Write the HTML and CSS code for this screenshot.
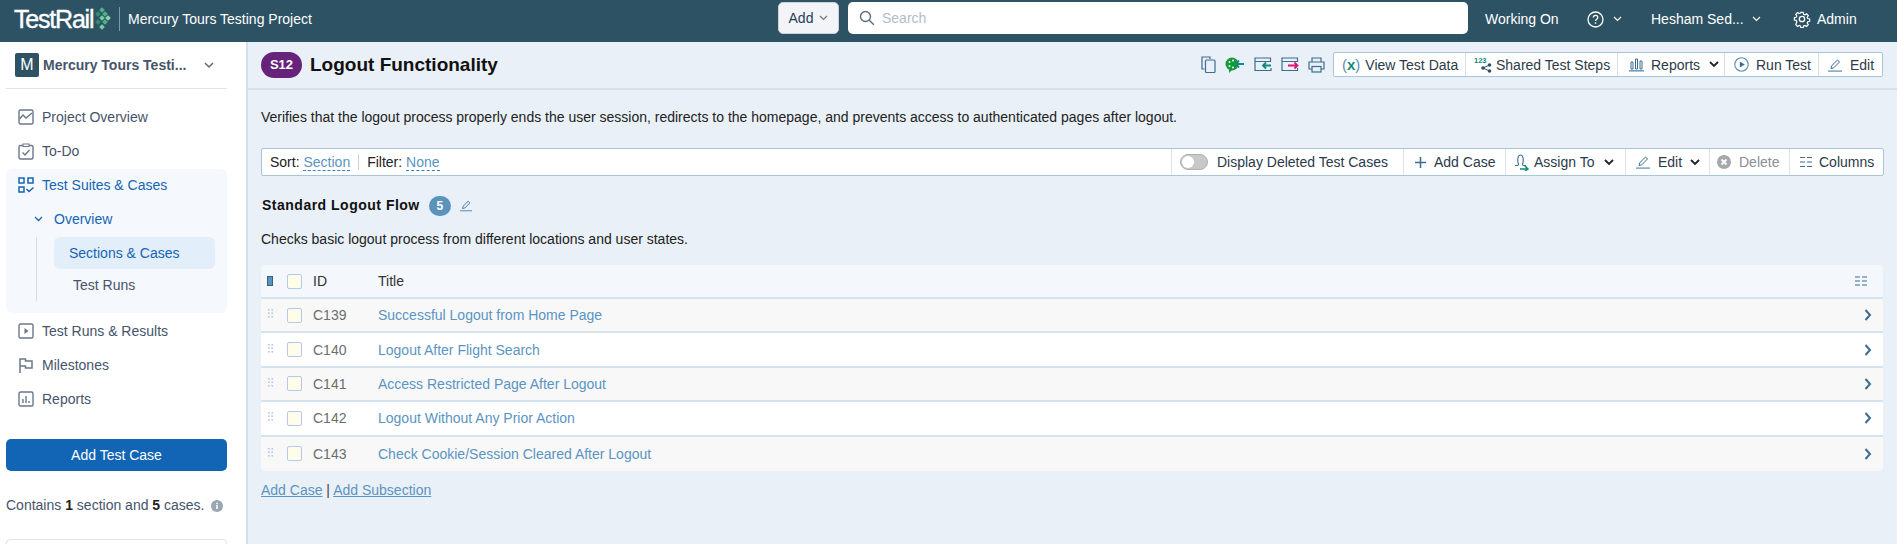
FILE: index.html
```html
<!DOCTYPE html>
<html lang="en">
<head>
<meta charset="utf-8">
<title>TestRail</title>
<link rel="stylesheet" href="styles.css">
</head>
<body>
<header class="topbar">
  <div class="brand">
    <span class="logo-text">TestRail</span>
    <svg class="logo-mark" width="16" height="24" viewBox="0 0 16 24"><g fill="#4fb286"><rect x="5" y="1" width="4" height="4" transform="rotate(45 7 3)"/><rect x="1" y="5" width="4" height="4" transform="rotate(45 3 7)" fill="#2e8f6c"/><rect x="8" y="5" width="4" height="4" transform="rotate(45 10 7)"/><rect x="5" y="9" width="4" height="4" transform="rotate(45 7 11)" fill="#7ccaa4"/><rect x="11" y="9" width="4" height="4" transform="rotate(45 13 11)" fill="#8ed6b0"/><rect x="1" y="13" width="4" height="4" transform="rotate(45 3 15)" fill="#2e8f6c"/><rect x="8" y="13" width="4" height="4" transform="rotate(45 10 15)"/><rect x="5" y="18" width="4" height="4" transform="rotate(45 7 20)" fill="#7ccaa4"/></g></svg>
    <span class="brand-sep"></span>
    <span class="project-name">Mercury Tours Testing Project</span>
  </div>
  <button class="add-btn">Add <svg width="9" height="6" viewBox="0 0 9 6"><path d="M1 1l3.5 3.5L8 1" fill="none" stroke="#6b7785" stroke-width="1.2"/></svg></button>
  <div class="search">
    <svg width="16" height="16" viewBox="0 0 16 16"><circle cx="6.5" cy="6.5" r="5" fill="none" stroke="#5c6b7d" stroke-width="1.4"/><path d="M10.3 10.3l4.5 4.5" stroke="#5c6b7d" stroke-width="1.4"/></svg>
    <span class="search-ph">Search</span>
  </div>
  <nav class="top-links">
    <span class="working">Working On</span>
    <span class="help"><svg width="17" height="17" viewBox="0 0 17 17"><circle cx="8.5" cy="8.5" r="7.5" fill="none" stroke="#fff" stroke-width="1.3"/><path d="M6.3 6.6c0-3 4.5-3 4.5-.2 0 1.8-2.3 1.8-2.3 3.7" fill="none" stroke="#fff" stroke-width="1.3"/><rect x="7.8" y="11.3" width="1.4" height="1.5" fill="#fff"/></svg><svg width="9" height="6" viewBox="0 0 9 6"><path d="M1 1l3.5 3.5L8 1" fill="none" stroke="#fff" stroke-width="1.2"/></svg></span>
    <span class="user">Hesham Sed... <svg width="9" height="6" viewBox="0 0 9 6"><path d="M1 1l3.5 3.5L8 1" fill="none" stroke="#fff" stroke-width="1.2"/></svg></span>
    <span class="admin"><svg width="18" height="18" viewBox="0 0 18 18"><circle cx="9" cy="9" r="2.7" fill="none" stroke="#fff" stroke-width="1.3"/><path d="M7.6 1.5h2.8l.4 2.2 1.5.7 1.9-1.2 2 2-1.2 1.9.6 1.5 2.1.4v2.8l-2.1.4-.6 1.5 1.2 1.9-2 2-1.9-1.2-1.5.6-.4 2.1H7.6l-.4-2.1-1.5-.6-1.9 1.2-2-2L3 12.2l-.7-1.5L.2 10.3V7.5l2.1-.4.7-1.5L1.8 3.7l2-2 1.9 1.2 1.5-.7z" transform="translate(1.2 1.1) scale(.87)" fill="none" stroke="#fff" stroke-width="1.4"/></svg>Admin</span>
  </nav>
</header>

<div class="layout">
  <aside class="sidebar">
    <div class="proj-select">
      <span class="proj-avatar">M</span>
      <span class="proj-title">Mercury Tours Testi...</span>
      <svg width="10" height="7" viewBox="0 0 10 7"><path d="M1 1l4 4 4-4" fill="none" stroke="#5b6b7d" stroke-width="1.5"/></svg>
    </div>
    <div class="nav-item">
      <svg class="nav-icon" width="16" height="16" viewBox="0 0 16 16"><rect x="1" y="1" width="14" height="14" rx="1.5" fill="none" stroke="#69778c" stroke-width="1.4"/><path d="M1.5 10l3.5-4 3 3 6-5" fill="none" stroke="#69778c" stroke-width="1.4"/></svg>
      <span>Project Overview</span>
    </div>
    <div class="nav-item">
      <svg class="nav-icon" width="16" height="17" viewBox="0 0 16 17"><rect x="1" y="2.5" width="14" height="13.5" rx="1.5" fill="none" stroke="#69778c" stroke-width="1.4"/><rect x="5" y="1" width="6" height="2.5" fill="#fff" stroke="#69778c"/><path d="M4.5 9.500l2.500 2.500 4.500-5" fill="none" stroke="#69778c" stroke-width="1.4"/></svg>
      <span>To-Do</span>
    </div>
    <div class="nav-group">
      <div class="nav-item active-top">
        <svg class="nav-icon" width="16" height="16" viewBox="0 0 16 16"><g fill="none" stroke="#1565b5" stroke-width="1.5"><rect x="1" y="1" width="5" height="5"/><rect x="10" y="1" width="5" height="5"/><rect x="1" y="10" width="5" height="5"/><path d="M8.5 12l2.500 2.500 4.500-4"/></g></svg>
        <span>Test Suites &amp; Cases</span>
      </div>
      <div class="nav-sub">
        <svg width="9" height="6" viewBox="0 0 9 6"><path d="M1 1l3.5 3.5L8 1" fill="none" stroke="#1565b5" stroke-width="1.3"/></svg>
        <span>Overview</span>
      </div>
      <div class="nav-tree">
        <div class="tree-item tree-current">Sections &amp; Cases</div>
        <div class="tree-item">Test Runs</div>
      </div>
    </div>
    <div class="nav-item">
      <svg class="nav-icon" width="16" height="16" viewBox="0 0 16 16"><rect x="1" y="1" width="14" height="14" rx="1.5" fill="none" stroke="#69778c" stroke-width="1.4"/><path d="M6.5 5l4 3-4 3z" fill="#69778c"/></svg>
      <span>Test Runs &amp; Results</span>
    </div>
    <div class="nav-item">
      <svg class="nav-icon" width="16" height="16" viewBox="0 0 16 16"><path d="M2 16V2h5.5v2H14v7H7.5V9H2" fill="none" stroke="#69778c" stroke-width="1.5"/></svg>
      <span>Milestones</span>
    </div>
    <div class="nav-item">
      <svg class="nav-icon" width="16" height="16" viewBox="0 0 16 16"><rect x="1" y="1" width="14" height="14" rx="1.5" fill="none" stroke="#69778c" stroke-width="1.4"/><path d="M5 8v4M8 5v7M11 10v2" stroke="#69778c" stroke-width="1.4"/></svg>
      <span>Reports</span>
    </div>
    <button class="primary-btn">Add Test Case</button>
    <p class="summary">Contains <b>1</b> section and <b>5</b> cases. <svg class="info" width="12" height="12" viewBox="0 0 12 12"><circle cx="6" cy="6" r="6" fill="#9ba6b3"/><rect x="5.2" y="5" width="1.6" height="4" fill="#fff"/><rect x="5.2" y="2.8" width="1.6" height="1.4" fill="#fff"/></svg></p>
    <div class="side-card"></div>
  </aside>

  <main class="main">
    <div class="title-row">
      <span class="pill">S12</span>
      <h1 class="title">Logout Functionality</h1>
      <div class="title-icons">
        <svg width="15" height="17" viewBox="0 0 15 17"><path d="M3.5 13H1V1h8v2" fill="none" stroke="#3f6d8f" stroke-width="1.2"/><rect x="4.5" y="4" width="9.5" height="12.5" rx="1" fill="none" stroke="#3f6d8f" stroke-width="1.2"/></svg>
        <svg width="20" height="17" viewBox="0 0 20 17"><circle cx="7" cy="8" r="6.5" fill="#129b38"/><path d="M7 14l-3 3v-4z" fill="#129b38"/><circle cx="4.5" cy="6" r="1" fill="#fff"/><circle cx="8" cy="4.5" r="1" fill="#fff"/><circle cx="4.5" cy="10" r="1" fill="#fff"/><circle cx="8" cy="11.5" r="1" fill="#fff"/><path d="M19 8h-8M14 4.500L10.500 8l3.500 3.500" fill="none" stroke="#118a78" stroke-width="1.8"/></svg>
        <svg width="18" height="15" viewBox="0 0 18 15"><path d="M17 11v2.500H1V1h15.500v3.500H1" fill="none" stroke="#3f6d8f" stroke-width="1.2"/><path d="M17 8.500H9M12 5.500l-3 3 3 3" fill="none" stroke="#118a78" stroke-width="1.8"/></svg>
        <svg width="18" height="15" viewBox="0 0 18 15"><path d="M16.500 11v2.500H1V1h15.500v3.500H1" fill="none" stroke="#3f6d8f" stroke-width="1.2"/><path d="M7 8.500h9.500M13.500 5.500l3 3-3 3" fill="none" stroke="#e0136e" stroke-width="1.8"/></svg>
        <svg width="17" height="16" viewBox="0 0 17 16"><path d="M4 5V1h9v4M4 12H1V5h15v7h-3" fill="none" stroke="#3f6d8f" stroke-width="1.2"/><rect x="4" y="9.5" width="9" height="5.5" fill="none" stroke="#3f6d8f" stroke-width="1.2"/></svg>
      </div>
      <div class="btn-bar">
        <span class="bar-item w-data"><span class="var-icon">(<i>x</i>)</span>View Test Data</span>
        <span class="bar-item w-shared"><svg width="18" height="16" viewBox="0 0 18 16"><text x="0" y="6" class="num-icon">123</text><g fill="#2d5263"><circle cx="9" cy="11" r="1.8"/><circle cx="15.5" cy="8" r="1.8"/><circle cx="15.5" cy="14" r="1.8"/></g><path d="M9 11l6.500-3M9 11l6.500 3" stroke="#2d5263"/></svg>Shared Test Steps</span>
        <span class="bar-item w-reports"><svg width="15" height="14" viewBox="0 0 15 14"><path d="M2 4h2v7H2zM6.500 1h2v10h-2zM11 3h2v8h-2z" fill="none" stroke="#3f6d8f"/><rect y="12" width="15" height="1.6" fill="#6e9fc0"/></svg>Reports<svg class="bar-chev" width="10" height="7" viewBox="0 0 10 7"><path d="M1 1l4 4 4-4" fill="none" stroke="#222" stroke-width="1.8"/></svg></span>
        <span class="bar-item w-run"><svg width="15" height="15" viewBox="0 0 15 15"><circle cx="7.5" cy="7.5" r="6.7" fill="none" stroke="#5c8db0" stroke-width="1.1"/><path d="M5.800 4.500l5 3-5 3z" fill="#3f6d8f"/></svg>Run Test</span>
        <span class="bar-item w-edit"><svg width="14" height="14" viewBox="0 0 14 14"><path d="M3 10.500l.6-2.700L9.500 2l2 2-5.800 5.900z" fill="none" stroke="#3f6d8f"/><rect y="12.4" width="14" height="1.4" fill="#6e9fc0"/></svg>Edit</span>
      </div>
    </div>

    <div class="content">
      <p class="lead">Verifies that the logout process properly ends the user session, redirects to the homepage, and prevents access to authenticated pages after logout.</p>

      <div class="toolbar">
        <div class="tb-left">
          <span>Sort: <a class="dash">Section</a></span>
          <span class="tb-sep"></span>
          <span>Filter: <a class="dash">None</a></span>
        </div>
        <span class="tb-item w-toggle"><span class="toggle"></span>Display Deleted Test Cases</span>
        <span class="tb-item w-addcase"><svg width="11" height="11" viewBox="0 0 11 11"><path d="M5.500 0v11M0 5.500h11" stroke="#3f6d8f" stroke-width="1.5"/></svg>Add Case</span>
        <span class="tb-item w-assign"><svg width="15" height="17" viewBox="0 0 15 17"><path d="M1 11.500h2.500C5 11.500 4.500 10 4 8.500 3.300 6 3.800 1 6.500 1s3.200 5 2.500 7.500c-.5 1.500-1 3 .5 3H12" fill="none" stroke="#3f6d8f" stroke-width="1.1"/><path d="M6 15h8M11 12l3 3-3 2" stroke="#118a78" stroke-width="1.5" fill="none"/></svg>Assign To<svg class="bar-chev" width="10" height="7" viewBox="0 0 10 7"><path d="M1 1l4 4 4-4" fill="none" stroke="#222" stroke-width="1.8"/></svg></span>
        <span class="tb-item w-tbedit"><svg width="14" height="14" viewBox="0 0 14 14"><path d="M3 10.500l.6-2.700L9.500 2l2 2-5.800 5.900z" fill="none" stroke="#3f6d8f"/><rect y="12.4" width="14" height="1.4" fill="#6e9fc0"/></svg>Edit<svg class="bar-chev" width="10" height="7" viewBox="0 0 10 7"><path d="M1 1l4 4 4-4" fill="none" stroke="#222" stroke-width="1.8"/></svg></span>
        <span class="tb-item w-delete"><svg width="14" height="14" viewBox="0 0 14 14"><circle cx="7" cy="7" r="7" fill="#a3a8ad"/><path d="M4.500 4.500l5 5M9.500 4.500l-5 5" stroke="#fff" stroke-width="1.8"/></svg>Delete</span>
        <span class="tb-item w-columns"><svg width="12" height="12" viewBox="0 0 12 12"><path d="M0 1.500h5M7 1.500h5M0 6h5M7 6h5M0 10.500h5M7 10.500h5" stroke="#3f6d8f" stroke-width="1.1"/></svg>Columns</span>
      </div>

      <div class="group-head">
        <h2 class="group-title">Standard Logout Flow</h2>
        <span class="count">5</span>
        <svg width="12" height="13" viewBox="0 0 14 14"><path d="M3 10.500l.6-2.700L9.500 2l2 2-5.800 5.900z" fill="none" stroke="#3f6d8f"/><rect y="12.4" width="14" height="1.4" fill="#6e9fc0"/></svg>
      </div>
      <p class="group-desc">Checks basic logout process from different locations and user states.</p>

      <div class="table">
        <div class="row head">
          <span class="handle"><span class="col-marker"></span></span>
          <span class="check"></span>
          <span class="cid head-text">ID</span>
          <span class="ctitle head-text">Title</span>
          <svg class="columns-ico" width="12" height="10" viewBox="0 0 12 10"><path d="M0 1h5M7 1h5M0 5h5M7 5h5M0 9h5M7 9h5" stroke="#3f6d8f" stroke-width="1.1"/></svg>
        </div>
        <div class="row odd">
          <span class="handle"><i class="dots"></i></span><span class="check"></span><span class="cid">C139</span><a class="ctitle">Successful Logout from Home Page</a>
          <svg class="go" width="8" height="12" viewBox="0 0 8 12"><path d="M1.500 1l4.500 5-4.500 5" fill="none" stroke="#3f6d8f" stroke-width="2"/></svg>
        </div>
        <div class="row">
          <span class="handle"><i class="dots"></i></span><span class="check"></span><span class="cid">C140</span><a class="ctitle">Logout After Flight Search</a>
          <svg class="go" width="8" height="12" viewBox="0 0 8 12"><path d="M1.500 1l4.500 5-4.500 5" fill="none" stroke="#3f6d8f" stroke-width="2"/></svg>
        </div>
        <div class="row odd">
          <span class="handle"><i class="dots"></i></span><span class="check"></span><span class="cid">C141</span><a class="ctitle">Access Restricted Page After Logout</a>
          <svg class="go" width="8" height="12" viewBox="0 0 8 12"><path d="M1.500 1l4.500 5-4.500 5" fill="none" stroke="#3f6d8f" stroke-width="2"/></svg>
        </div>
        <div class="row">
          <span class="handle"><i class="dots"></i></span><span class="check"></span><span class="cid">C142</span><a class="ctitle">Logout Without Any Prior Action</a>
          <svg class="go" width="8" height="12" viewBox="0 0 8 12"><path d="M1.500 1l4.500 5-4.500 5" fill="none" stroke="#3f6d8f" stroke-width="2"/></svg>
        </div>
        <div class="row odd last">
          <span class="handle"><i class="dots"></i></span><span class="check"></span><span class="cid">C143</span><a class="ctitle">Check Cookie/Session Cleared After Logout</a>
          <svg class="go" width="8" height="12" viewBox="0 0 8 12"><path d="M1.500 1l4.500 5-4.500 5" fill="none" stroke="#3f6d8f" stroke-width="2"/></svg>
        </div>
      </div>
      <p class="add-links"><a>Add Case</a> | <a>Add Subsection</a></p>
    </div>
  </main>
</div>
</body>
</html>
```

FILE: styles.css
```css
* { box-sizing: border-box; }
html, body { margin: 0; height: 544px; overflow: hidden; }
body { font: 14px/16px "Liberation Sans", Arial, sans-serif; color: #222; background: #e9f0f7; }
p, h1, h2 { margin: 0; }
svg { display: block; flex: none; }

.topbar { height: 42px; background: #2d5263; display: flex; align-items: center; color: #fff; padding-bottom: 4px; }
.brand { width: 778px; display: flex; align-items: center; padding-left: 14px; }
.logo-text { font-size: 25px; font-weight: 400; letter-spacing: -1.2px; width: 81px; -webkit-text-stroke: .4px #fff; }
.brand-sep { width: 1px; height: 24px; background: #7f9aa7; margin: 0 8px; }
.project-name { font-size: 14px; }
.add-btn { width: 61px; height: 32px; align-self: flex-start; margin-top: 2px; border: 1px solid #c9d2db; border-radius: 5px; background: #f2f4f7; color: #24405c; font: 14px "Liberation Sans", sans-serif; display: flex; align-items: center; justify-content: center; gap: 6px; padding: 0; }
.search { width: 620px; height: 32px; align-self: flex-start; margin: 2px 0 0 9px; background: #fff; border-radius: 5px; display: flex; align-items: center; gap: 7px; padding-left: 11px; }
.search-ph { color: #b4bcc8; }
.top-links { display: flex; align-items: center; margin-left: 17px; }
.working { width: 102px; }
.help { width: 64px; display: flex; align-items: center; gap: 9px; }
.user { width: 142px; display: flex; align-items: center; gap: 4px; }
.user svg { margin-left: 4px; }
.admin { display: flex; align-items: center; gap: 6px; }

.layout { display: flex; height: 502px; }
.sidebar { width: 248px; background: #fff; border-right: 2px solid #d6e0ea; padding: 0 19px 0 6px; flex: none; overflow: hidden; color: #46546a; }
.proj-select { height: 47px; display: flex; align-items: center; padding-left: 9px; border-bottom: 1px solid #dfe4ea; }
.proj-avatar { width: 24px; height: 24px; background: #2d5263; color: #fff; border-radius: 2px; font-size: 16px; text-align: center; line-height: 24px; flex: none; }
.proj-title { font-weight: 700; color: #46546a; width: 165px; padding-left: 4px; white-space: nowrap; font-size: 14px; }
.nav-item { height: 34px; display: flex; align-items: center; gap: 8px; padding-left: 12px; }
.proj-select + .nav-item { margin-top: 11px; }
.nav-group { background: #f5f8fd; border-radius: 6px; height: 144px; margin-top: 1px; color: #1565b5; }
.active-top { height: 32px; }
.nav-sub { height: 34px; margin-top: 1px; display: flex; align-items: center; gap: 11px; padding-left: 28px; }
.nav-tree { margin: 1px 0 0 30px; border-left: 1px solid #d8dee6; padding-left: 17px; height: 64px; width: 191px; }
.tree-item { height: 32px; line-height: 32px; padding-left: 15px; color: #46546a; width: 161px; }
.tree-current { background: #e3eefb; color: #1565b5; border-radius: 6px; padding-left: 15px; }
.tree-current + .tree-item { padding-left: 19px; }
.nav-group + .nav-item { margin-top: 1px; }
.primary-btn { display: block; width: 221px; height: 32px; margin-top: 23px; background: #1265b5; color: #fff; border: 0; border-radius: 5px; font: 14px "Liberation Sans", sans-serif; }
.summary { margin-top: 26px; white-space: nowrap; }
.summary b { color: #222; }
.info { display: inline-block; vertical-align: -2px; margin-left: 3px; }
.side-card { height: 40px; margin-top: 26px; border: 1px solid #dfe4ea; border-radius: 4px; }

.main { flex: 1; min-width: 0; }
.title-row { height: 48px; border-bottom: 2px solid #d6e0ea; display: flex; align-items: center; padding: 0 14px 0 13px; }
.pill { width: 41px; height: 26px; border-radius: 13px; background: #67237b; color: #fff; font-weight: 700; font-size: 13px; text-align: center; line-height: 26px; }
.title { font-size: 19px; line-height: 24px; font-weight: 700; color: #111; margin-left: 8px; white-space: nowrap; }
.title-icons { display: flex; align-items: center; gap: 9px; width: 132px; margin: 0 0 1px auto; }
.btn-bar { display: flex; height: 25px; margin-bottom: 1px; background: #fff; border: 1px solid #a9c5dc; border-radius: 2px; }
.bar-item { display: flex; align-items: center; border-right: 1px solid #d4dfe8; white-space: nowrap; color: #2b3a4a; }
.bar-item:last-child { border-right: 0; }
.w-data { width: 132px; padding-left: 8px; gap: 5px; }
.w-shared { width: 152px; padding-left: 8px; gap: 4px; }
.w-reports { width: 107px; padding-left: 11px; gap: 7px; }
.w-run { width: 94px; padding-left: 9px; gap: 7px; }
.w-edit { width: 63px; padding-left: 9px; gap: 8px; }
.var-icon { color: #5c8db0; font-size: 15px; }
.var-icon i { color: #118a78; font-style: normal; font-weight: 700; }
.num-icon { font: 700 7.5px "Liberation Sans", sans-serif; fill: #118a78; }
.w-reports .bar-chev { margin-left: 2px; }

.content { padding: 19px 13px 0 13px; }
.lead { line-height: 16px; }
.toolbar { margin-top: 23px; height: 28px; background: #fff; border: 1px solid #a9c5dc; border-radius: 2px; display: flex; align-items: center; }
.tb-left { flex: 1; display: flex; align-items: center; gap: 8px; padding-left: 8px; }
.tb-sep { width: 1px; height: 16px; background: #c6d3df; }
.dash { color: #5b94c3; border-bottom: 1px dashed #3f7fb5; line-height: 15px; display: inline-block; }
.tb-item { height: 26px; display: flex; align-items: center; border-left: 1px solid #dbe4ec; white-space: nowrap; color: #2b3a4a; }
.w-toggle { width: 232px; padding-left: 8px; gap: 9px; }
.w-addcase { width: 102px; padding-left: 11px; gap: 8px; }
.w-assign { width: 120px; padding-left: 8px; gap: 5px; }
.w-assign .bar-chev { margin-left: 5px; }
.w-tbedit { width: 84px; padding-left: 10px; gap: 8px; }
.w-delete { width: 80px; padding-left: 7px; gap: 8px; color: #8a8f95; }
.w-columns { width: 94px; padding-left: 10px; gap: 7px; }
.toggle { width: 28px; height: 16px; border-radius: 8px; background: #c6c8ca; border: 1px solid #aeb1b4; position: relative; }
.toggle::after { content: ""; position: absolute; left: 1px; top: 1px; width: 12px; height: 12px; border-radius: 50%; background: #fff; }

.group-head { height: 20px; margin-top: 19px; display: flex; align-items: center; padding-left: 1px; }
.group-title { font-size: 14px; font-weight: 700; color: #111; letter-spacing: .5px; line-height: 16px; }
.count { width: 22px; height: 20px; border-radius: 10px; background: #5b93bd; color: #fff; text-align: center; font-size: 12px; font-weight: 700; line-height: 20px; margin: 2px 9px 0 9px; }
.group-desc { margin-top: 16px; }

.table { margin-top: 18px; width: 1622px; border-radius: 4px; overflow: hidden; }
.row { height: 34.4px; display: flex; align-items: center; background: #fff; border-bottom: 2px solid #d5e3ee; color: #6d6d6d; }
.row.odd { background: #f8f8f8; }
.row.last { border-bottom: 0; }
.row.head { height: 34px; background: #f4f7fc; color: #333; }
.handle { width: 26px; padding-left: 6px; display: flex; }
.col-marker { width: 6px; height: 10px; background: #5b93bd; border: 1px solid #34637f; }
.dots { width: 7px; height: 11px; margin-top: -3px; background-image: radial-gradient(circle, #b9cde0 1px, transparent 1.2px); background-size: 3.5px 3.5px; }
.check { width: 15px; height: 15px; border: 1px solid #b6c8ec; border-radius: 2px; background: #fdfde9; margin-right: 11px; }
.cid { width: 65px; }
.ctitle { flex: 1; color: #5b94c3; }
.head-text { color: #333; }
.columns-ico { margin-right: 16px; }
.go { margin-right: 11px; }
.add-links { margin-top: 11px; color: #444; }
.add-links a { color: #5b94c3; text-decoration: underline; }
```
